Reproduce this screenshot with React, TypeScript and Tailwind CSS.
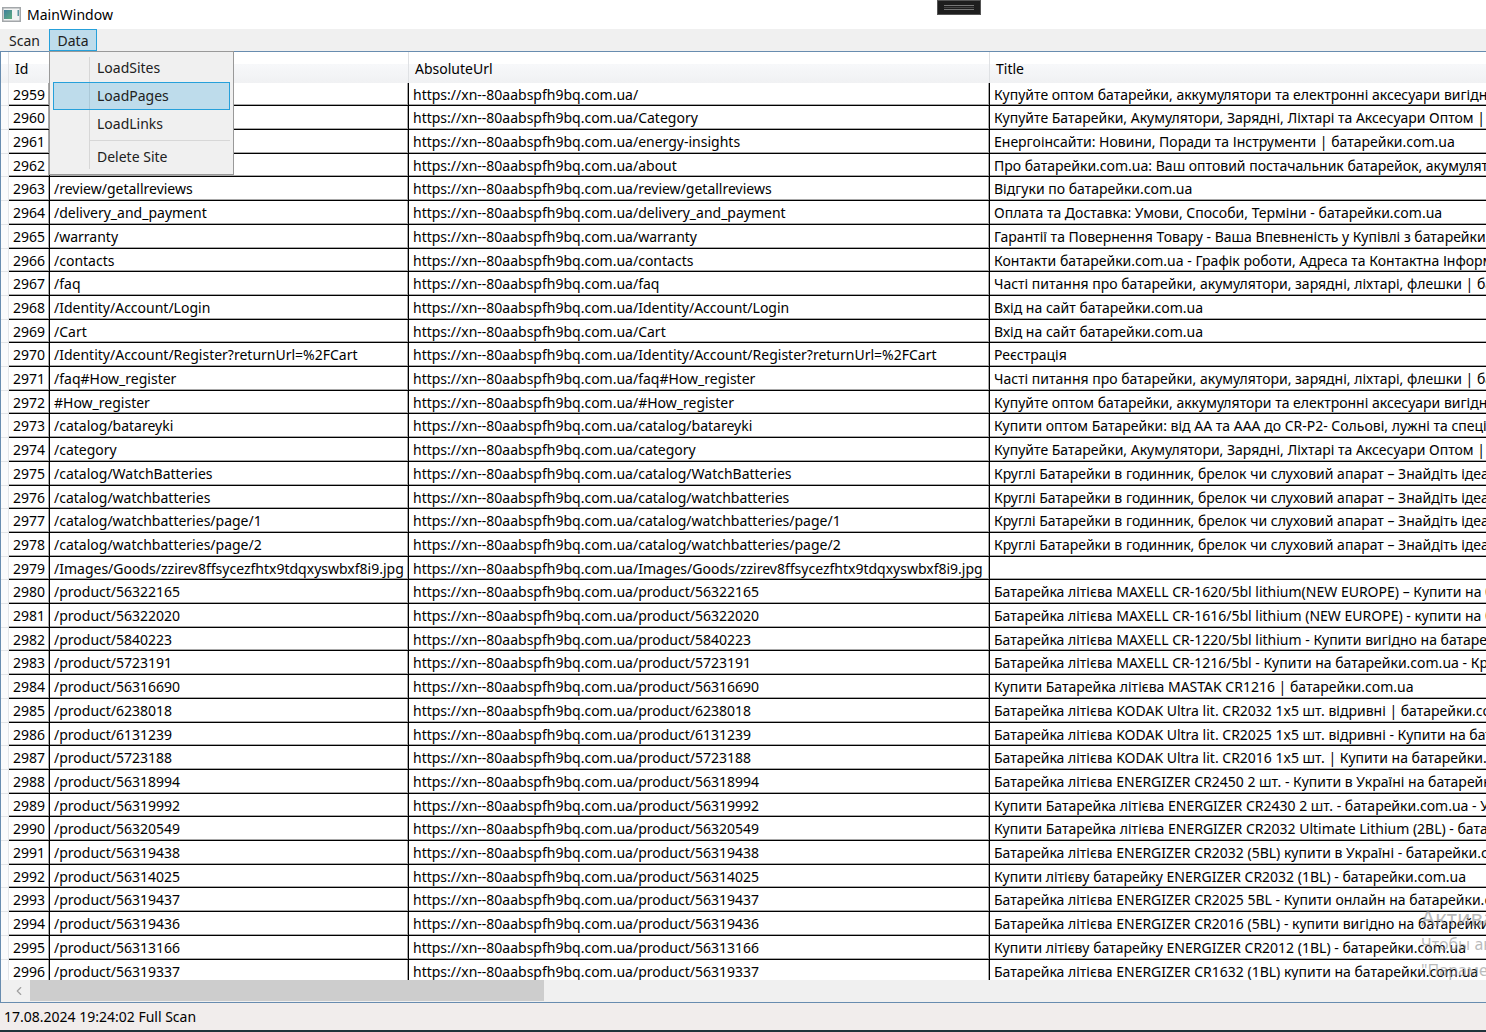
import { useState } from 'react';
import { ChevronLeft } from 'lucide-react';

const SITE = 'https://xn--80aabspfh9bq.com.ua';

const TITLES = {
  wholesale: 'Купуйте оптом батарейки, аккумулятори та електронні аксесуари вигідно',
  category: 'Купуйте Батарейки, Акумулятори, Зарядні, Ліхтарі та Аксесуари Оптом | батарейки.com.ua',
  faq: 'Часті питання про батарейки, акумулятори, зарядні, ліхтарі, флешки | батарейки.com.ua',
  watch: 'Круглі Батарейки в годинник, брелок чи слуховий апарат – Знайдіть ідеальну',
  login: 'Вхід на сайт батарейки.com.ua',
};

interface Page {
  id: number;
  path: string;
  url?: string;
  title: string;
}

const pages: Page[] = [
  { id: 2959, path: '/', title: TITLES.wholesale },
  { id: 2960, path: '/Category', title: TITLES.category },
  { id: 2961, path: '/energy-insights', title: 'Енергоінсайти: Новини, Поради та Інструменти | батарейки.com.ua' },
  { id: 2962, path: '/about', title: 'Про батарейки.com.ua: Ваш оптовий постачальник батарейок, акумуляторів' },
  { id: 2963, path: '/review/getallreviews', title: 'Відгуки по батарейки.com.ua' },
  { id: 2964, path: '/delivery_and_payment', title: 'Оплата та Доставка: Умови, Способи, Терміни - батарейки.com.ua' },
  { id: 2965, path: '/warranty', title: 'Гарантії та Повернення Товару - Ваша Впевненість у Купівлі з батарейки.com.ua' },
  { id: 2966, path: '/contacts', title: 'Контакти батарейки.com.ua - Графік роботи, Адреса та Контактна Інформація' },
  { id: 2967, path: '/faq', title: TITLES.faq },
  { id: 2968, path: '/Identity/Account/Login', title: TITLES.login },
  { id: 2969, path: '/Cart', title: TITLES.login },
  { id: 2970, path: '/Identity/Account/Register?returnUrl=%2FCart', title: 'Реєстрація' },
  { id: 2971, path: '/faq#How_register', title: TITLES.faq },
  { id: 2972, path: '#How_register', url: `${SITE}/#How_register`, title: TITLES.wholesale },
  { id: 2973, path: '/catalog/batareyki', title: 'Купити оптом Батарейки: від AA та AAA до CR-P2- Сольові, лужні та спеціальні' },
  { id: 2974, path: '/category', title: TITLES.category },
  { id: 2975, path: '/catalog/WatchBatteries', title: TITLES.watch },
  { id: 2976, path: '/catalog/watchbatteries', title: TITLES.watch },
  { id: 2977, path: '/catalog/watchbatteries/page/1', title: TITLES.watch },
  { id: 2978, path: '/catalog/watchbatteries/page/2', title: TITLES.watch },
  { id: 2979, path: '/Images/Goods/zzirev8ffsycezfhtx9tdqxyswbxf8i9.jpg', title: '' },
  { id: 2980, path: '/product/56322165', title: 'Батарейка літієва MAXELL CR-1620/5bl lithium(NEW EUROPE) – Купити на батарейки.com.ua' },
  { id: 2981, path: '/product/56322020', title: 'Батарейка літієва MAXELL CR-1616/5bl lithium (NEW EUROPE) - купити на батарейки.com.ua' },
  { id: 2982, path: '/product/5840223', title: 'Батарейка літієва MAXELL CR-1220/5bl lithium - Купити вигідно на батарейки.com.ua' },
  { id: 2983, path: '/product/5723191', title: 'Батарейка літієва MAXELL CR-1216/5bl - Купити на батарейки.com.ua - Краща ціна' },
  { id: 2984, path: '/product/56316690', title: 'Купити Батарейка літієва MASTAK CR1216 | батарейки.com.ua' },
  { id: 2985, path: '/product/6238018', title: 'Батарейка літієва KODAK Ultra lit. CR2032 1x5 шт. відривні | батарейки.com.ua' },
  { id: 2986, path: '/product/6131239', title: 'Батарейка літієва KODAK Ultra lit. CR2025 1x5 шт. відривні - Купити на батарейки.com.ua' },
  { id: 2987, path: '/product/5723188', title: 'Батарейка літієва KODAK Ultra lit. CR2016 1x5 шт. | Купити на батарейки.com.ua' },
  { id: 2988, path: '/product/56318994', title: 'Батарейка літієва ENERGIZER CR2450 2 шт. - Купити в Україні на батарейки.com.ua' },
  { id: 2989, path: '/product/56319992', title: 'Купити Батарейка літієва ENERGIZER CR2430 2 шт. - батарейки.com.ua - Україна' },
  { id: 2990, path: '/product/56320549', title: 'Купити Батарейка літієва ENERGIZER CR2032 Ultimate Lithium (2BL) - батарейки.com.ua' },
  { id: 2991, path: '/product/56319438', title: 'Батарейка літієва ENERGIZER CR2032 (5BL) купити в Україні - батарейки.com.ua' },
  { id: 2992, path: '/product/56314025', title: 'Купити літієву батарейку ENERGIZER CR2032 (1BL) - батарейки.com.ua' },
  { id: 2993, path: '/product/56319437', title: 'Батарейка літієва ENERGIZER CR2025 5BL - Купити онлайн на батарейки.com.ua' },
  { id: 2994, path: '/product/56319436', title: 'Батарейка літієва ENERGIZER CR2016 (5BL) - купити вигідно на батарейки.com.ua' },
  { id: 2995, path: '/product/56313166', title: 'Купити літієву батарейку ENERGIZER CR2012 (1BL) - батарейки.com.ua' },
  { id: 2996, path: '/product/56319337', title: 'Батарейка літієва ENERGIZER CR1632 (1BL) купити на батарейки.com.ua' },
];

const cell = 'overflow-hidden border-r border-b border-black pt-px pl-1 whitespace-nowrap shadow-[inset_-1px_-1px_0_#a8a8a8] last:border-r-0 last:shadow-[inset_0_-1px_0_#a8a8a8]';
const head = 'border-r border-[#dfe1e4] px-[6px] pt-[2px] text-left font-normal last:border-r-0';

const AppIcon = () => (
  <svg width="19" height="16" viewBox="0 0 19 16" aria-hidden="true">
    <defs>
      <linearGradient id="pane" x1="0" y1="0" x2="1" y2="1">
        <stop offset="0" stopColor="#3f7f9c" />
        <stop offset="1" stopColor="#5fae80" />
      </linearGradient>
    </defs>
    <rect x="0.75" y="0.75" width="17.5" height="13.5" fill="#f3f3f3" stroke="#a3a7aa" strokeWidth="1.5" />
    <rect x="2" y="3" width="8" height="9" fill="url(#pane)" />
    <rect x="15.5" y="3" width="1.5" height="6" fill="#5b96a0" />
  </svg>
);

const MenuItem = ({ label, active, onSelect }: {
  label: string;
  active: boolean;
  onSelect: (label: string) => void;
}) => (
  <button
    type="button"
    role="menuitem"
    onClick={() => onSelect(label)}
    className={`relative block h-7 w-full border pl-[43px] text-left ${active ? 'border-[#26a0da] bg-[#26a0da]/25' : 'border-transparent'}`}
  >
    {label}
  </button>
);

export default function App() {
  const [open, setOpen] = useState(true);
  const [selected, setSelected] = useState('LoadPages');

  return (
    <div className="flex h-screen flex-col overflow-hidden bg-white font-['Noto_Sans','Open_Sans',sans-serif] text-sm text-black">
      <header className="relative flex h-[29px] shrink-0 items-center gap-[6px] pl-[2px]">
        <AppIcon />
        <h1>MainWindow</h1>
        <div className="absolute top-0 left-[937px] flex h-[15px] w-11 flex-col justify-center gap-px border border-[#555] bg-[#1e1e1e] px-[6px]">
          <span className="h-px bg-[#777]" />
          <span className="h-px bg-[#444]" />
          <span className="h-px bg-[#777]" />
        </div>
      </header>

      <nav className="relative flex h-[22px] shrink-0 bg-[#f0f0f0] text-[#212121]">
        <button type="button" className="w-[49px] pt-px text-center">Scan</button>
        <div className="relative">
          <button
            type="button"
            aria-expanded={open}
            onClick={() => setOpen(!open)}
            className="block h-[22px] w-12 border border-[#26a0da] bg-[#26a0da]/25 pt-px leading-5"
          >
            Data
          </button>
          {open && (
            <div role="menu" className="absolute top-[22px] left-0 z-10 h-[124px] w-[185px] border border-[#999] bg-[#f0f0f0] px-[3px] pt-[2px]">
              <div className="absolute top-[5px] bottom-[5px] left-[39px] w-px bg-[#d7d7d7]" />
              <MenuItem label="LoadSites" active={selected === 'LoadSites'} onSelect={setSelected} />
              <MenuItem label="LoadPages" active={selected === 'LoadPages'} onSelect={setSelected} />
              <MenuItem label="LoadLinks" active={selected === 'LoadLinks'} onSelect={setSelected} />
              <div className="my-[2px] ml-9 h-px bg-[#d7d7d7]" />
              <MenuItem label="Delete Site" active={selected === 'Delete Site'} onSelect={setSelected} />
            </div>
          )}
        </div>
      </nav>

      <main className="flex min-h-0 flex-1 flex-col border-y border-l border-[#688caf] bg-[#f0f0f0]">
        <div className="min-h-0 flex-1 overflow-hidden">
          <table className="w-full table-fixed border-separate border-spacing-0 bg-white">
            <colgroup>
              <col className="w-2" />
              <col className="w-[41px]" />
              <col className="w-[359px]" />
              <col className="w-[581px]" />
              <col />
            </colgroup>
            <thead>
              <tr className="h-[31px] bg-linear-to-b from-white from-40% via-[#f7f8fa] via-40% to-[#f0f1f3]">
                <td className="border-r border-[#dfe1e4]" />
                <th className={head}>Id</th>
                <th className={head}>RelativeUrl</th>
                <th className={head}>AbsoluteUrl</th>
                <th className={head}>Title</th>
              </tr>
            </thead>
            <tbody>
              {pages.map(page => (
                <tr key={page.id} className="h-6 leading-5 nth-[10n+1]:h-[23px] nth-[10n+4]:h-[23px] nth-[10n+8]:h-[23px]">
                  <td className="border-r border-b border-[#e3e5e8] bg-[#fbfbfc]" />
                  <td className={cell}>{page.id}</td>
                  <td className={cell}>{page.path}</td>
                  <td className={cell}>{page.url ?? SITE + page.path}</td>
                  <td className={cell}>{page.title}</td>
                </tr>
              ))}
            </tbody>
          </table>
        </div>
        <div className="flex h-[22px] shrink-0 pb-px">
          <button type="button" aria-label="Scroll left" className="flex w-[29px] items-center justify-end pr-1 text-[#a0a0a0]">
            <ChevronLeft size={14} />
          </button>
          <div className="w-[514px] bg-[#cdcdcd]" />
        </div>
      </main>

      <footer className="h-[29px] shrink-0 border-b-2 border-[#22333b] bg-[#f1edec] pl-1 leading-[27px]">
        17.08.2024 19:24:02 Full Scan
      </footer>

      <div className="pointer-events-none absolute top-[903px] left-[1421px] w-[65px] overflow-hidden whitespace-nowrap text-[#8c8c8c]/60">
        <p className="text-[22px] leading-7">Активация Windows</p>
        <p className="text-base leading-[26px]">Чтобы активировать Windows, перейдите в раздел</p>
        <p className="text-base leading-[26px]">"Параметры".</p>
      </div>
    </div>
  );
}
